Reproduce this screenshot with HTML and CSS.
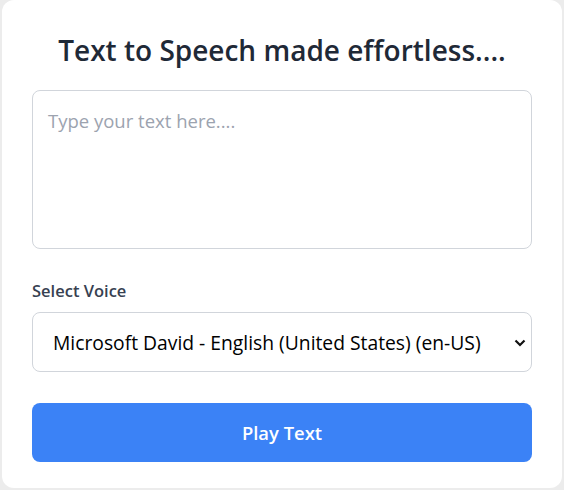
FILE: index.html
```html
<!DOCTYPE html>
<html lang="en">
<head>
<meta charset="utf-8">
<title>Text to Speech</title>
<link rel="stylesheet" href="styles.css">
</head>
<body>
<div class="card">
  <h1 class="title">Text to Speech made effortless....</h1>
  <textarea class="text-input" placeholder="Type your text here...."></textarea>
  <label class="label" for="voice">Select Voice</label>
  <div class="select-wrap">
    <select id="voice" class="select">
      <option>Microsoft David - English (United States) (en-US)</option>
    </select>
    <svg class="chevron" width="12" height="8" viewBox="0 0 12 8"><path d="M1.5 1.5 L6 6 L10.5 1.5" fill="none" stroke="#111" stroke-width="2.2"/></svg>
  </div>
  <button class="play">Play Text</button>
</div>
</body>
</html>
```
FILE: styles.css
```css
* { box-sizing: border-box; }
html, body { margin: 0; }
body {
  background: #ececec;
  font-family: "Open Sans", "Noto Sans", sans-serif;
  padding: 0 2px 2px 2px;
  height: 490px;
}
.card {
  background: #fff;
  border-radius: 12px;
  width: 560px;
  height: 488px;
  padding: 30px 30px 26px 30px;
  display: flex;
  flex-direction: column;
}
.title {
  margin: 0 0 20px 0;
  font-size: 28px;
  line-height: 40px;
  font-weight: 600;
  color: #1f2937;
  text-align: center;
}
.text-input {
  display: block;
  width: 100%;
  height: 159px;
  border: 1px solid #d1d5db;
  border-radius: 8px;
  padding: 16px 15px;
  font-family: inherit;
  font-size: 18.5px;
  line-height: 28px;
  resize: none;
  margin: 0 0 30px 0;
  outline: none;
}
.text-input::placeholder { color: #9ca3af; }
.label {
  display: block;
  font-size: 16.5px;
  line-height: 24px;
  font-weight: 600;
  color: #374151;
  margin-bottom: 9px;
}
.select-wrap { position: relative; }
.select {
  display: block;
  width: 100%;
  height: 60px;
  border: 1px solid #d1d5db;
  border-radius: 8px;
  background: #fff;
  padding: 0 20px;
  font-family: inherit;
  font-size: 19.3px;
  color: #000;
  -webkit-appearance: none;
  appearance: none;
  outline: none;
}
.chevron {
  position: absolute;
  right: 6px;
  top: 27px;
}
.play {
  margin-top: 31px;
  width: 100%;
  height: 59px;
  border: none;
  border-radius: 8px;
  background: #3b82f6;
  color: #fff;
  font-family: inherit;
  font-size: 18.4px;
  font-weight: 600;
}
```
